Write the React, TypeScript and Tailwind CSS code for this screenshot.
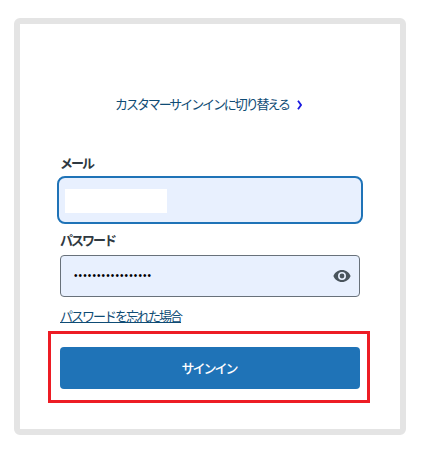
const font = { fontFamily: '"Noto Sans CJK JP", sans-serif' };

export default function App() {
  return (
    <div className="bg-white w-[422px] h-[449px] pt-[18px] pl-[14px]" style={font}>
      <div className="w-[392px] h-[417px] border-[6px] border-[#e4e4e4] rounded-[6px] bg-white px-[40px] flex flex-col">
        {/* switch link */}
        <a href="#" className="mt-[69px] h-[22px] pr-[3px] flex items-center justify-center gap-[8px] leading-[22px] text-[#0f4c75]">
          <span className="text-[13px] tracking-[-2.1px] whitespace-nowrap">カスタマーサインインに切り替える</span>
          <svg width="5" height="10" viewBox="0 0 5 10" className="mt-[1px]">
            <path d="M1 0.8 L4 5 L1 9.2" fill="none" stroke="#1a1ae0" strokeWidth="1.8" />
          </svg>
        </a>

        {/* email */}
        <label className="mt-[37px] h-[22px] leading-[22px] text-[13px] font-bold text-[#2f3941] tracking-[-2px]">メール</label>
        <div className="-mx-[3px] mt-[2px] h-[48px] border-[2px] border-[#1f73b7] rounded-[8px] bg-[#e8f0fe] pl-[6px] pt-[11px]">
          <div className="w-[102px] h-[24px] bg-white" />
        </div>

        {/* password */}
        <label className="mt-[5px] h-[22px] leading-[22px] text-[13px] font-bold text-[#2f3941] tracking-[-2px]">パスワード</label>
        <div className="mt-[4px] h-[42px] border border-[#68717a] rounded-[4px] bg-[#e8f0fe] pl-[13px] pr-[8px] flex items-center justify-between">
          <input
            type="password"
            readOnly
            value="aaaaaaaaaaaaaaaaa"
            className="w-[200px] bg-transparent outline-none text-black text-[10px] tracking-[1.1px] -mt-[2px]"
            style={{ fontFamily: '"Liberation Sans", sans-serif' }}
          />
          <svg width="18" height="12" viewBox="0 0 18 12">
            <path
              fillRule="evenodd"
              d="M9 0C5 0 1.8 2.4 0.4 6 1.8 9.6 5 12 9 12s7.200-2.400 8.600-6C16.200 2.400 13 0 9 0zM9 10a4 4 0 1 1 0-8 4 4 0 0 1 0 8zM9 3.600a2.400 2.400 0 1 0 0 4.800 2.400 2.400 0 0 0 0-4.800z"
              fill="#49545c"
            />
          </svg>
        </div>

        <a href="#" className="mt-[9px] h-[20px] leading-[20px] text-[13px] tracking-[-2px] text-[#0f4c75] underline self-start whitespace-nowrap">
          パスワードを忘れた場合
        </a>

        {/* button in red highlight */}
        <div className="-ml-[12px] -mr-[10px] mt-[5px] h-[72px] border-[3px] border-[#ed1c24] pl-[9px] pr-[7px] pt-[13px]">
          <button className="w-full h-[42px] rounded-[4px] bg-[#1f73b7] text-white text-[13px] font-medium tracking-[-2px] pr-[2px]">
            サインイン
          </button>
        </div>
      </div>
    </div>
  );
}
